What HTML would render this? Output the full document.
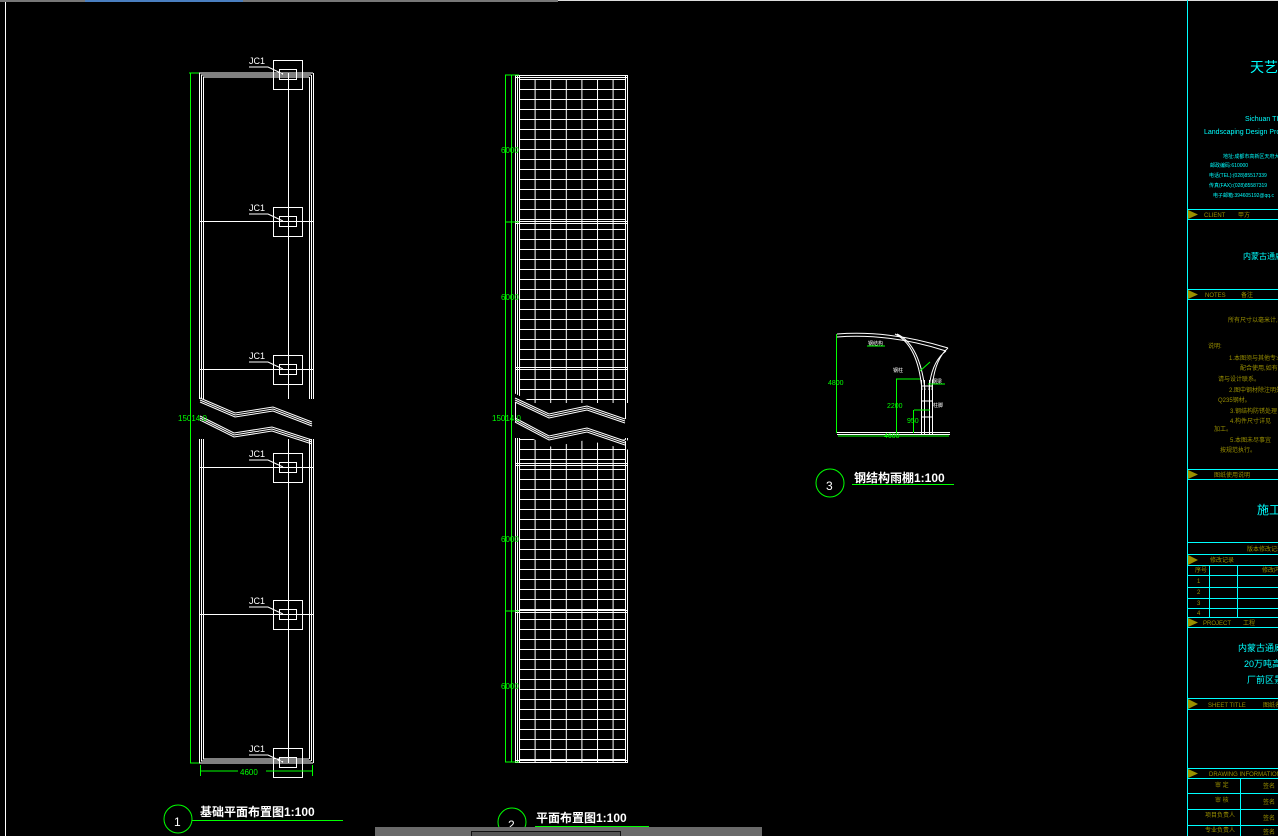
<!DOCTYPE html>
<html><head><meta charset="utf-8"><style>
html,body{margin:0;padding:0;background:#000;width:1278px;height:836px;overflow:hidden}
svg{display:block}
text{font-family:"Liberation Sans","Noto Sans CJK SC",sans-serif}
</style></head><body>
<svg width="1278" height="836" viewBox="0 0 1278 836" xmlns="http://www.w3.org/2000/svg">
<rect width="1278" height="836" fill="#000"/>
<rect x="0" y="0" width="558" height="2" fill="#777"/>
<rect x="85" y="0" width="158" height="2" fill="#4a7fc0"/>
<rect x="558" y="0" width="720" height="1" fill="#ddd"/>
<line x1="5.5" y1="2" x2="5.5" y2="836" stroke="#fff"/>

<!-- Drawing 1 -->
<g stroke="#fff" fill="none" stroke-width="1">
<path d="M199.5 73V763M201.5 75V761M203.5 77V759"/>
<path d="M313.5 73V763M311.5 75V761M309.5 77V759"/>
<path d="M199 73H313M201 75H311M203 77H309"/>
<path d="M199 763H313M201 761H311M203 759H309"/>
<path d="M288.5 73V763"/>
<g id="jc"><rect x="273.5" y="60.5" width="29" height="29"/><rect x="279.5" y="69.5" width="17" height="10"/><path d="M249 67H268L283 74"/></g>
<use href="#jc" y="147"/><use href="#jc" y="295"/><use href="#jc" y="393"/><use href="#jc" y="540"/><use href="#jc" y="688"/>
<path d="M200 221.5H313M200 369.5H313M200 467.5H313M200 614.5H313"/>
</g>
<rect x="196" y="399" width="120" height="40" fill="#000"/>
<g stroke="#fff" fill="none" stroke-width="1">
<path d="M200 398L235 413L273 407L312 422M200 400L235 415L273 409L312 424M200 402L235 417L273 411L312 426"/>
<path d="M200 416L234 433L272 427L312 440M200 418L234 435L272 429L312 442M200 420L234 437L272 431L312 444"/>
</g>
<g fill="#fff" font-size="9"><text x="249" y="64">JC1</text><text x="249" y="211">JC1</text><text x="249" y="359">JC1</text><text x="249" y="457">JC1</text><text x="249" y="604">JC1</text><text x="249" y="752">JC1</text></g>
<g stroke="#0f0" fill="none"><path d="M190.5 73V763M189 73H199M190 763H199M200 771H312M200.5 765V776M312.5 765V776"/></g>
<text x="178" y="421" fill="#0f0" font-size="8">15014.0</text>
<rect x="238" y="766" width="28" height="9" fill="#000"/>
<text x="240" y="775" fill="#0f0" font-size="8">4600</text>
<circle cx="178" cy="819" r="14" fill="none" stroke="#0f0"/>
<text x="174" y="826" fill="#fff" font-size="12">1</text>
<text x="200" y="816" fill="#fff" font-size="12" font-weight="bold">基础平面布置图1:100</text>
<line x1="192" y1="820.5" x2="343" y2="820.5" stroke="#0f0"/>

<!-- Drawing 2 -->
<defs>
<pattern id="grid" x="519" y="79" width="15.6" height="10" patternUnits="userSpaceOnUse">
<path d="M0 0.5H15.6M0.5 0V10" stroke="#fff" fill="none"/>
</pattern>
</defs>
<rect x="519" y="79" width="106" height="683" fill="url(#grid)"/>
<g stroke="#fff" fill="none">
<path d="M515.5 75V762M517.5 75V762M519.5 75V762M625.5 75V762M627.5 75V762"/>
<path d="M515 75.5H628M515 77.5H628M515 762.5H628M515 760.5H628"/>
<path d="M515 221.5H628M515 223.5H628M515 367.5H628M515 369.5H628M515 463.5H628M515 465.5H628M515 610.5H628M515 612.5H628"/>
</g>
<rect x="512" y="403" width="120" height="35" fill="#000"/>
<polygon points="512,392 552,413 586,406 630,420 630,430 586,418 552,425 512,405" fill="#000"/>
<polygon points="512,420 552,438 586,430 630,441 630,450 586,440 552,447 512,430" fill="#000"/>
<g stroke="#fff" fill="none">
<path d="M515 398L549 414L587 406L625 419M515 400L549 416L587 408L625 421M515 402L549 418L587 410L625 423"/>
<path d="M515 418L549 436L587 428L625 441M515 420L549 438L587 430L625 443M515 422L549 440L587 432L625 445"/>
<path d="M515.5 402V422M625.5 375V419M625.5 441V465"/>
</g>
<g stroke="#0f0" fill="none"><path d="M505.5 75V762M511.5 75V762M505 75H519M505 222H519M505 611H519M505 762H519"/></g>
<g fill="#0f0" font-size="8"><text x="501" y="153">6000</text><text x="501" y="300">6000</text><text x="501" y="542">6000</text><text x="501" y="689">6000</text><text x="492" y="421">15014.0</text></g>
<circle cx="512" cy="822" r="14" fill="none" stroke="#0f0"/>
<text x="508" y="829" fill="#fff" font-size="12">2</text>
<text x="536" y="822" fill="#fff" font-size="12" font-weight="bold">平面布置图1:100</text>
<line x1="535" y1="826.5" x2="649" y2="826.5" stroke="#0f0"/>

<!-- Drawing 3 -->
<g stroke="#fff" fill="none">
<path d="M837 334Q890 330 948 348M837 337Q890 333 946 351"/>
<path d="M895 334Q918 345 922 390M897 334Q920 345 925 390"/>
<path d="M948 348Q934 360 932 390M946 351Q931 362 929 390"/>
<path d="M921.5 380V434M924.5 380V434M929.5 380V434M932.5 380V434"/>
<path d="M922 386H932M922 401H932M922 417H932"/>
<path d="M837 432.5H950M837 434.5H950"/>
</g>
<g stroke="#0f0" fill="none"><path d="M836.5 334V433M867 346H885M896 379H920M896.5 379V433M914 410H930M913.5 410V433M838 436H949M920 371L930 362M928 384H945"/></g>
<g fill="#0f0" font-size="7"><text x="828" y="385">4800</text><text x="887" y="408">2200</text><text x="907" y="423">950</text><text x="884" y="438">4600</text></g>
<g fill="#fff" font-size="5"><text x="868" y="345">钢结构</text><text x="893" y="372">钢柱</text><text x="932" y="383">钢梁</text><text x="933" y="407">柱脚</text></g>
<circle cx="830" cy="483" r="14" fill="none" stroke="#0f0"/>
<text x="826" y="490" fill="#fff" font-size="12">3</text>
<text x="854" y="482" fill="#fff" font-size="12" font-weight="bold">钢结构雨棚1:100</text>
<line x1="852" y1="484.5" x2="954" y2="484.5" stroke="#0f0"/>

<!-- Title block -->
<g stroke="#0ff" fill="none">
<path d="M1187.5 0V836"/>
<path d="M1187 209.5H1278M1187 219.5H1278M1187 289.5H1278M1187 299.5H1278M1187 469.5H1278M1187 479.5H1278M1187 542.5H1278M1187 554.5H1278M1187 565.5H1278M1187 575.5H1278M1187 587.5H1278M1187 598.5H1278M1187 608.5H1278M1187 617.5H1278M1187 627.5H1278M1187 698.5H1278M1187 709.5H1278M1187 768.5H1278M1187 778.5H1278M1187 793.5H1278M1187 809.5H1278M1187 825.5H1278"/>
<path d="M1209.5 565V618M1237.5 565V618M1240.5 778V836"/>
</g>
<g fill="#998f00">
<polygon points="1188,210 1198,214.5 1188,219"/><polygon points="1188,290 1198,294.5 1188,299"/>
<polygon points="1188,470 1198,474.5 1188,479"/><polygon points="1188,555 1198,560 1188,565"/>
<polygon points="1188,618 1198,622.5 1188,627"/><polygon points="1188,699 1198,704 1188,709"/>
<polygon points="1188,769 1198,773.5 1188,778"/>
</g>
<g fill="#0ff">
<text x="1250" y="72" font-size="14">天艺·</text>
<text x="1245" y="121" font-size="7">Sichuan TI</text>
<text x="1204" y="134" font-size="7">Landscaping Design Pro</text>
<text x="1243" y="259" font-size="8">内蒙古通威光伏</text>
<text x="1257" y="514" font-size="12">施工图</text>
<text x="1238" y="651" font-size="9">内蒙古通威光伏</text>
<text x="1244" y="667" font-size="9">20万吨高纯</text>
<text x="1247" y="683" font-size="9">厂前区景观</text>
</g>
<g fill="#0ff" font-size="5">
<text x="1223" y="158">地址:成都市高新区天府大道</text>
<text x="1210" y="167">邮政编码:610000</text>
<text x="1209" y="177">电话(TEL):(028)85517339</text>
<text x="1209" y="187">传真(FAX):(028)85587319</text>
<text x="1213" y="197">电子邮箱:394605192@qq.c</text>
</g>
<g fill="#998f00" font-size="6">
<text x="1204" y="217">CLIENT</text><text x="1238" y="217">甲方</text>
<text x="1205" y="297">NOTES</text><text x="1241" y="297">备注</text>
<text x="1228" y="322">所有尺寸以毫米计,标高以米计</text>
<text x="1208" y="348">说明:</text>
<text x="1229" y="360">1.本图须与其他专业图纸</text>
<text x="1240" y="370">配合使用,如有不符</text>
<text x="1218" y="381">请与设计联系。</text>
<text x="1229" y="392">2.图中钢材除注明外均为</text>
<text x="1218" y="402">Q235钢材。</text>
<text x="1230" y="413">3.钢结构防锈处理</text>
<text x="1230" y="423">4.构件尺寸详见</text>
<text x="1214" y="431">加工。</text>
<text x="1230" y="442">5.本图未尽事宜</text>
<text x="1220" y="452">按规范执行。</text>
<text x="1214" y="477">图纸使用说明</text>
<text x="1247" y="551">版本修改记录</text>
<text x="1210" y="562">修改记录</text>
<text x="1195" y="572">序号</text><text x="1262" y="572">修改内容</text>
<text x="1197" y="583">1</text><text x="1197" y="594">2</text><text x="1197" y="605">3</text><text x="1197" y="615">4</text>
<text x="1203" y="625">PROJECT</text><text x="1243" y="625">工程</text>
<text x="1208" y="707">SHEET TITLE</text><text x="1263" y="707">图纸名</text>
<text x="1209" y="776">DRAWING INFORMATION</text>
<text x="1215" y="787">审 定</text><text x="1263" y="788">签名</text>
<text x="1215" y="802">审 核</text><text x="1263" y="804">签名</text>
<text x="1205" y="817">项目负责人</text><text x="1263" y="820">签名</text>
<text x="1205" y="832">专业负责人</text><text x="1263" y="834">签名</text>
</g>

<!-- bottom bar -->
<rect x="375" y="827" width="387" height="9" fill="#6a6a6a"/>
<rect x="471.5" y="831.5" width="149" height="6" fill="#555" stroke="#111"/>
</svg>
</body></html>
